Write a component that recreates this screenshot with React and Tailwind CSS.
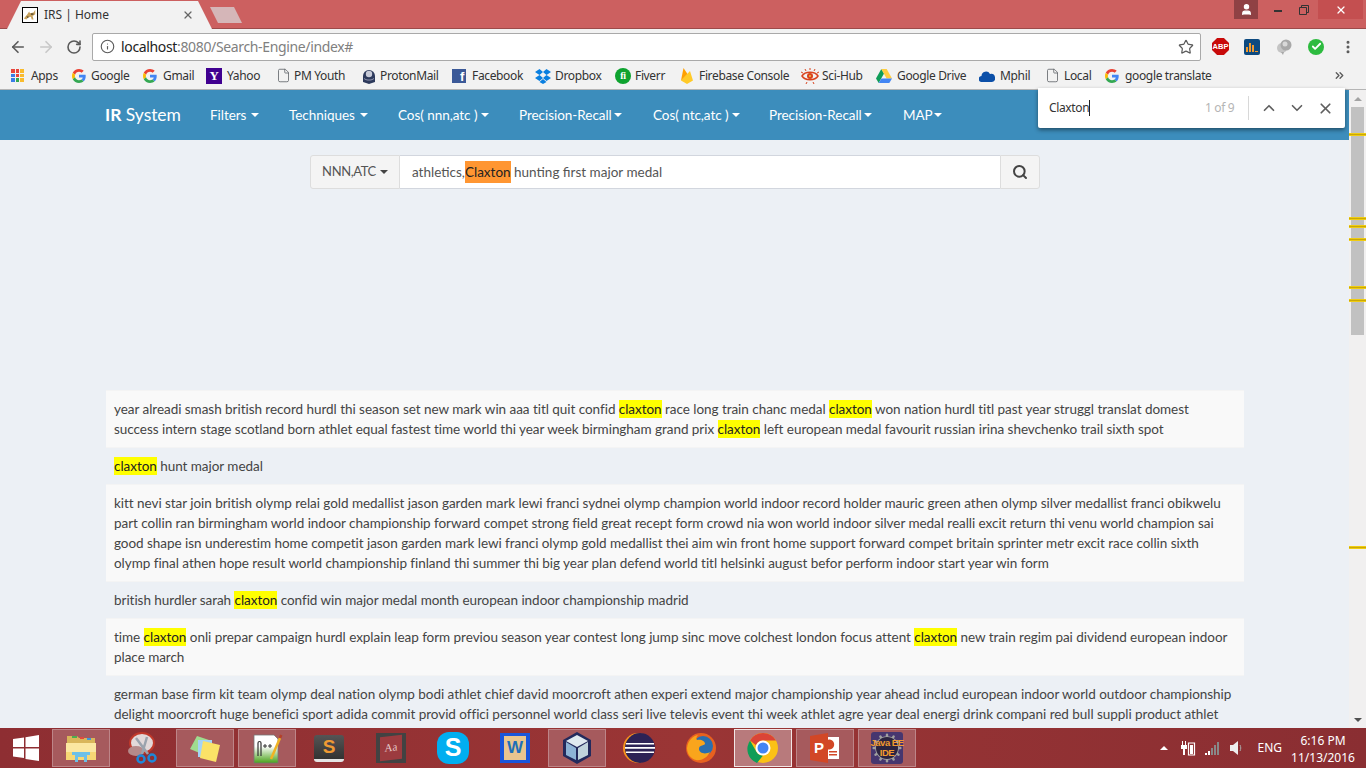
import React from "react";
import { ArrowLeft, ArrowRight, RotateCw, Info, Star, Search, ChevronUp, ChevronDown, X, User, Check, File, MoreVertical, ChevronsRight, Cog } from "lucide-react";

// -----------------------------
// SMALL ICONS
// -----------------------------
const GoogleG = () => (
  <svg viewBox="0 0 48 48" className="w-[14px] h-[14px]">
    <path fill="#EA4335" d="M24 9.5c3.5 0 6.7 1.2 9.2 3.6l6.9-6.9C35.9 2.4 30.5 0 24 0 14.6 0 6.5 5.4 2.6 13.2l8 6.2C12.4 13.7 17.7 9.5 24 9.5z" />
    <path fill="#4285F4" d="M47 24.5c0-1.6-.1-3.100-.4-4.500H24v9h12.900c-.6 3-2.200 5.500-4.800 7.200l7.700 6c4.500-4.200 7.200-10.300 7.200-17.700z" />
    <path fill="#FBBC05" d="M10.600 28.600c-.5-1.400-.8-3-.8-4.600s.3-3.200.8-4.600l-8-6.200C.9 16.500 0 20.100 0 24s.9 7.500 2.600 10.800l8-6.200z" />
    <path fill="#34A853" d="M24 48c6.500 0 11.900-2.100 15.800-5.800l-7.700-6c-2.200 1.500-4.900 2.300-8.100 2.300-6.300 0-11.600-4.200-13.400-9.900l-8 6.200C6.500 42.600 14.600 48 24 48z" />
  </svg>
);

const AppsIcon = () => (
  <div className="grid grid-cols-3 gap-[1px] w-[13px] h-[13px]">
    <span className="bg-[#e8453c]" />
    <span className="bg-[#e8453c]" />
    <span className="bg-[#f9bb2d]" />
    <span className="bg-[#3a7de8]" />
    <span className="bg-[#e8453c]" />
    <span className="bg-[#f9bb2d]" />
    <span className="bg-[#3a7de8]" />
    <span className="bg-[#34a853]" />
    <span className="bg-[#f9bb2d]" />
  </div>
);

const YahooIcon = () => (
  <div className="w-4 h-4 bg-[#400090] text-white text-[13px] font-bold leading-4 text-center font-['Liberation_Serif',serif]">Y</div>
);

const PageIcon = () => <File size={15} strokeWidth={1.3} className="text-[#5f6368]" />;

const ProtonIcon = () => (
  <svg viewBox="0 0 16 16" className="w-4 h-4">
    <path fill="#2d3a5c" d="M2 8a6 6 0 0 1 12 0v6l-6 2-6-2z" />
    <circle cx="8" cy="6" r="3.200" fill="#c8cbd8" />
    <path fill="#8f94ad" d="M3 10c3 2 7 2 10 0v1c-3 2-7 2-10 0z" />
  </svg>
);

const FacebookIcon = () => (
  <div className="w-[14px] h-[14px] bg-[#3b5998] text-white text-[13px] font-bold leading-[15px] text-right pr-[2px] font-['Liberation_Sans',sans-serif]">f</div>
);

const DropboxIcon = () => (
  <svg viewBox="0 0 16 16" className="w-4 h-4">
    <path fill="#0a7fe0" d="M4.500 1 0 4l4.500 3L8 4zM11.500 1 8 4l3.500 3L16 4zM0 10l4.500 3L8 10 4.500 7zM11.500 7 8 10l3.500 3 4.500-3zM4.500 14 8 16l3.500-2L8 11z" />
  </svg>
);

const FiverrIcon = () => (
  <div className="w-4 h-4 rounded-full bg-[#0ea32f] text-white text-[10px] font-bold leading-4 text-center font-['Liberation_Serif',serif]">fi</div>
);

const FirebaseIcon = () => (
  <svg viewBox="0 0 16 16" className="w-4 h-4">
    <path fill="#ffa000" d="M2 12.500 4.500 0l4 6z" />
    <path fill="#f57c00" d="M2 12.500 8.500 6l1.500 2.500z" />
    <path fill="#ffca28" d="M2 12.500 11 3l3 9.500L8 16z" />
  </svg>
);

const SciHubIcon = () => (
  <svg viewBox="0 0 18 16" className="w-[18px] h-4">
    <path fill="none" stroke="#d9431e" strokeWidth="1.500" d="M1 8c3-5 13-5 16 0-3 5-13 5-16 0z" />
    <circle cx="9" cy="8" r="3" fill="#d9431e" />
    <circle cx="9" cy="8" r="1" fill="#f6c33b" />
    <path stroke="#d9431e" strokeWidth="1" d="M5 3 4 1M9 2V0M13 3l1-2M2 5 0 4M16 5l2-1M6 14l-1 2M12 14l1 2" />
  </svg>
);

const DriveIcon = () => (
  <svg viewBox="0 0 16 16" className="w-4 h-4">
    <path fill="#0f9d58" d="M5.300 1 0 10.500l2.700 4.500L8 5.500z" />
    <path fill="#ffcd40" d="M5.300 1h5.400L16 10.500h-5.400z" />
    <path fill="#4285f4" d="M2.700 15h10.600l2.700-4.500H5.400z" />
  </svg>
);

const CloudIcon = () => (
  <svg viewBox="0 0 16 12" className="w-4 h-3">
    <path fill="#0b4fa8" d="M3 12a3 3 0 0 1-.5-6A4.500 4.500 0 0 1 11 4a4 4 0 0 1 2 8z" />
  </svg>
);

const FaviconCat = () => (
  <svg viewBox="0 0 16 16" className="w-4 h-4 border border-black bg-white">
    <path fill="#c9a25d" d="M1 12 5 7l2-3 1 2 4-1 2-3v5l-3 2 1 4h-2l-1-3-4 1-1 2z" />
    <path fill="#6b5a36" d="M9 6h3v2H9zM4 9l3 1-2 2z" />
  </svg>
);

const BalloonIcon = () => (
  <svg viewBox="0 0 16 16" className="w-4 h-4">
    <circle cx="6" cy="9" r="5" fill="#c4c4c4" />
    <circle cx="10" cy="6" r="5.500" fill="#a8a8a8" />
    <circle cx="9" cy="5" r="2.500" fill="#d8d8d8" />
    <path fill="#a8a8a8" d="M5 13h3l-1 3z" />
  </svg>
);

const Caret = ({ className = "" }) => (
  <span className={`inline-block w-0 h-0 border-x-[4px] border-x-transparent border-t-[4px] border-t-current ${className}`} />
);

// -----------------------------
// TASKBAR ICONS
// -----------------------------
const WinLogo = () => (
  <svg viewBox="0 0 26 26" className="w-[26px] h-[26px]">
    <path fill="#fff" d="M0 4l11-1.500V12H0zM12.500 2.300 26 0v12H12.500zM0 13.500h11V23L0 21.500zM12.500 13.500H26V26l-13.500-2z" />
  </svg>
);

const ExplorerIcon = () => (
  <svg viewBox="0 0 32 32" className="w-8 h-8">
    <path fill="#d9b65a" d="M2 4h10l2 2h16v6H2z" />
    <rect x="7" y="4" width="5" height="2" fill="#4caf50" />
    <rect x="15" y="5" width="4" height="2" fill="#e04b3c" />
    <rect x="22" y="6" width="4" height="2" fill="#3a9ad9" />
    <path fill="#fbe7a1" d="M1 11h30v17H1z" />
    <path fill="#f7d774" d="M1 20h30v8H1z" />
    <path fill="#6cc0e8" d="M7 20h18v3h-3v7h-3v-5h-6v5h-3v-7H7z" />
  </svg>
);

const SnipIcon = () => (
  <svg viewBox="0 0 32 32" className="w-8 h-8">
    <ellipse cx="15" cy="11" rx="12" ry="10" fill="#e2d9d9" stroke="#c0392b" strokeWidth="2" />
    <ellipse cx="9" cy="19" rx="8" ry="5" fill="#b58a8a" />
    <path stroke="#9aa3ad" strokeWidth="2.500" d="M9 6l12 16M20 5 15 22" />
    <circle cx="25" cy="26" r="3.500" fill="none" stroke="#1e88d9" strokeWidth="2.500" />
    <circle cx="14" cy="27" r="3.500" fill="none" stroke="#1e88d9" strokeWidth="2.500" />
  </svg>
);

const StickyIcon = () => (
  <svg viewBox="0 0 32 32" className="w-8 h-8">
    <path fill="#9fdc8f" d="M1 17 8 4l12 4-7 14z" />
    <path fill="#a5d3f5" d="M9 8h14v17H9z" />
    <path fill="#fbe267" d="M14 9l17 4-4 17-16-4z" />
  </svg>
);

const NppIcon = () => (
  <svg viewBox="0 0 32 32" className="w-8 h-8">
    <defs>
      <linearGradient id="npp" x1="0" y1="0" x2="0" y2="1">
        <stop offset="0.400" stopColor="#fff" />
        <stop offset="1" stopColor="#4aa31a" />
      </linearGradient>
    </defs>
    <path fill="url(#npp)" stroke="#777" strokeWidth="0.800" d="M3 3h20l4 4v24H3z" />
    <path stroke="#333" strokeWidth="1.200" fill="none" d="M7 24V11a1.500 1.500 0 0 1 3 0v13" />
    <path stroke="#333" strokeWidth="1" d="M12 14h4M14 12v4M17 14h4M19 12v4" />
    <path stroke="#f0b323" strokeWidth="2.500" d="M20 27 29 6" />
    <path stroke="#b3412a" strokeWidth="2.500" d="M29 6l1.300-3" />
  </svg>
);

const SublimeIcon = () => (
  <div className="w-[30px] h-[27px] rounded-[3px] bg-gradient-to-b from-[#555] to-[#333] border-b-[3px] border-[#e5e5e5] text-[#ef9a33] text-[19px] font-bold leading-[24px] text-center font-['Liberation_Sans',sans-serif]">S</div>
);

const DictIcon = () => (
  <div className="w-[30px] h-[30px] bg-[#424242] flex items-center justify-center">
    <div className="w-[22px] h-[24px] bg-[#9c3b3f] text-[#e6c9c9] text-[11px] leading-[22px] text-center -skew-y-6 font-['Liberation_Serif',serif]">Aa</div>
  </div>
);

const SkypeIcon = () => (
  <div className="w-[32px] h-[32px] rounded-[12px] bg-[#01aef0] text-white text-[25px] font-bold leading-[31px] text-center font-['Liberation_Sans',sans-serif]">S</div>
);

const WordIcon = () => (
  <div className="w-[30px] h-[30px] bg-[#1a56db] flex items-center justify-center">
    <div className="w-[22px] h-[24px] bg-[#e9c58f] text-[#1f6fb8] text-[17px] font-bold leading-[24px] text-center font-['Liberation_Sans',sans-serif]">W</div>
  </div>
);

const CubeIcon = () => (
  <svg viewBox="0 0 32 32" className="w-8 h-8">
    <path fill="#232a5c" d="M16 0 30 8v16l-14 8-14-8V8z" />
    <path fill="#dfeaf0" d="M16 3 27 9 16 15 5 9z" />
    <path fill="#8db4d6" d="M5 10l10 6v12L5 23z" />
    <path fill="#c0d4dc" d="M27 10l-10 6v12l10-5z" />
  </svg>
);

const EclipseIcon = () => (
  <svg viewBox="0 0 32 32" className="w-8 h-8">
    <circle cx="15" cy="16" r="15" fill="#f7941e" />
    <circle cx="17" cy="16" r="15" fill="#2c2255" />
    <path fill="#fff" d="M3 11h28v1.500H3zM2 15h30v1.800H2zM3 19.500h28V21H3z" />
  </svg>
);

const FirefoxIcon = () => (
  <svg viewBox="0 0 32 32" className="w-8 h-8">
    <circle cx="16" cy="16" r="15" fill="#e8611f" />
    <circle cx="18" cy="14" r="10" fill="#2a6fb0" />
    <path fill="#f9a51c" d="M2 16C3 8 8 4 13 3c-2 2-2 4-1 5 4-1 8 1 8 4-2 2-6 1-6 5 0 4 6 6 11 3-3 6-9 9-14 8C6 27 2 22 2 16z" />
  </svg>
);

const ChromeIcon = () => (
  <svg viewBox="0 0 32 32" className="w-8 h-8">
    <circle cx="16" cy="16" r="15" fill="#fbc116" />
    <path fill="#db4437" d="M3 8.500A15 15 0 0 1 29 8.500H16a7.500 7.500 0 0 0-7 4.800z" />
    <path fill="#0f9d58" d="M3 8.500 9.500 20a7.500 7.500 0 0 0 6.500 3.500L10 31A15 15 0 0 1 3 8.500z" />
    <circle cx="16" cy="16" r="7.500" fill="#fff" />
    <circle cx="16" cy="16" r="5.500" fill="#4285f4" />
  </svg>
);

const PowerPointIcon = () => (
  <svg viewBox="0 0 32 32" className="w-8 h-8">
    <path fill="#fff" d="M16 5h14v22H16z" />
    <path fill="#d24726" d="M18 8a5 5 0 1 1 0 9zM20 19h8v1.500h-8zM20 22h8v1.500h-8z" />
    <path fill="#d24726" d="M1 4 19 1v30L1 28z" />
    <text x="5" y="21" fill="#fff" fontSize="15" fontWeight="bold" fontFamily="Liberation Sans">P</text>
  </svg>
);

const JavaEEIcon = () => (
  <div className="w-8 h-8 bg-[#46366f] rounded-[3px] relative flex items-center justify-center">
    <Cog size={32} strokeWidth={1.8} className="absolute inset-0 text-[#a0a0a0]" />
    <div className="absolute inset-[5px] rounded-full bg-[#2c2440]" />
    <div className="relative text-[#f29a2e] text-[9.5px] font-bold leading-[10px] text-center whitespace-nowrap tracking-[-0.5px] font-['Liberation_Sans',sans-serif]">
      Java EE
      <br />
      IDE
    </div>
  </div>
);

// -----------------------------
// DATA
// -----------------------------
const bookmarks = [
  { icon: <AppsIcon />, label: "Apps", w: "w-[61px]", gap: "gap-[7px]" },
  { icon: <GoogleG />, label: "Google", w: "w-[71px]", gap: "gap-[5px]" },
  { icon: <GoogleG />, label: "Gmail", w: "w-[63px]", gap: "gap-[6px]" },
  { icon: <YahooIcon />, label: "Yahoo", w: "w-[70px]", gap: "gap-[5px]" },
  { icon: <PageIcon />, label: "PM Youth", w: "w-[85px]", gap: "gap-[3px]" },
  { icon: <ProtonIcon />, label: "ProtonMail", w: "w-[91px]", gap: "gap-[3px]" },
  { icon: <FacebookIcon />, label: "Facebook", w: "w-[83px]", gap: "gap-[6px]" },
  { icon: <DropboxIcon />, label: "Dropbox", w: "w-[80px]", gap: "gap-[4px]" },
  { icon: <FiverrIcon />, label: "Fiverr", w: "w-[64px]", gap: "gap-[4px]" },
  { icon: <FirebaseIcon />, label: "Firebase Console", w: "w-[122px]", gap: "gap-[4px]" },
  { icon: <SciHubIcon />, label: "Sci-Hub", w: "w-[75px]", gap: "gap-[3px]" },
  { icon: <DriveIcon />, label: "Google Drive", w: "w-[103px]", gap: "gap-[5px]" },
  { icon: <CloudIcon />, label: "Mphil", w: "w-[66px]", gap: "gap-[5px]" },
  { icon: <PageIcon />, label: "Local", w: "w-[60px]", gap: "gap-[4px]" },
  { icon: <GoogleG />, label: "google translate", w: "w-[125px]", gap: "gap-[6px]" },
];

const navItems = [
  { label: "Filters", w: "w-[79px]", caret: "ml-[5px]" },
  { label: "Techniques", w: "w-[109px]", caret: "ml-[5px]" },
  { label: "Cos( nnn,atc )", w: "w-[121px]", caret: "ml-[4px]" },
  { label: "Precision-Recall", w: "w-[134px]", caret: "ml-[2px]" },
  { label: "Cos( ntc,atc )", w: "w-[116px]", caret: "ml-[3px]" },
  { label: "Precision-Recall", w: "w-[134px]", caret: "ml-[2px]" },
  { label: "MAP", w: "w-[70px]", caret: "ml-[1px]" },
];

// ** marks a highlighted term
const results = [
  [
    "year alreadi smash british record hurdl thi season set new mark win aaa titl quit confid **claxton** race long train chanc medal **claxton** won nation hurdl titl past year struggl translat domest",
    "success intern stage scotland born athlet equal fastest time world thi year week birmingham grand prix **claxton** left european medal favourit russian irina shevchenko trail sixth spot",
  ],
  ["**claxton** hunt major medal"],
  [
    "kitt nevi star join british olymp relai gold medallist jason garden mark lewi franci sydnei olymp champion world indoor record holder mauric green athen olymp silver medallist franci obikwelu",
    "part collin ran birmingham world indoor championship forward compet strong field great recept form crowd nia won world indoor silver medal realli excit return thi venu world champion sai",
    "good shape isn underestim home competit jason garden mark lewi franci olymp gold medallist thei aim win front home support forward compet britain sprinter metr excit race collin sixth",
    "olymp final athen hope result world championship finland thi summer thi big year plan defend world titl helsinki august befor perform indoor start year win form",
  ],
  ["british hurdler sarah **claxton** confid win major medal month european indoor championship madrid"],
  [
    "time **claxton** onli prepar campaign hurdl explain leap form previou season year contest long jump sinc move colchest london focus attent **claxton** new train regim pai dividend european indoor",
    "place march",
  ],
  [
    "german base firm kit team olymp deal nation olymp bodi athlet chief david moorcroft athen experi extend major championship year ahead includ european indoor world outdoor championship",
    "delight moorcroft huge benefici sport adida commit provid offici personnel world class seri live televis event thi week athlet agre year deal energi drink compani red bull suppli product athlet",
  ],
];

const Line = ({ text }) => (
  <div className="whitespace-nowrap">
    {text.split("**").map((part, i) =>
      i % 2 === 1 ? (
        <span key={i} className="bg-[#ffff00] text-[#222] py-[1px]">{part}</span>
      ) : (
        <span key={i}>{part}</span>
      )
    )}
  </div>
);

const marks = ["top-[43px]", "top-[127px]", "top-[135px]", "top-[148px]", "top-[196px]", "top-[209px]", "top-[456px]"];

const taskIcons = [
  { icon: <ExplorerIcon />, open: true },
  { icon: <SnipIcon /> },
  { icon: <StickyIcon />, open: true },
  { icon: <NppIcon />, open: true },
  { icon: <SublimeIcon /> },
  { icon: <DictIcon /> },
  { icon: <SkypeIcon /> },
  { icon: <WordIcon /> },
  { icon: <CubeIcon />, open: true },
  { icon: <EclipseIcon /> },
  { icon: <FirefoxIcon /> },
  { icon: <ChromeIcon />, active: true },
  { icon: <PowerPointIcon />, open: true },
  { icon: <JavaEEIcon />, open: true },
];

export default function App() {
  return (
    <div className="h-screen w-full overflow-hidden flex flex-col relative bg-[#f2f2f2] font-['Noto_Sans',sans-serif]">
      {/* tab strip */}
      <div className="h-[29px] shrink-0 bg-[#cc6060] border-b border-[#9c4a4a] flex pl-[7px] relative">
        <div className="w-[205px] h-[28px] mt-[1px] bg-[#f2f2f2] [clip-path:polygon(0_100%,14px_0,191px_0,100%_100%)] flex items-center pl-[15px] pr-[18px]">
          <FaviconCat />
          <span className="ml-[6px] text-[12px] text-[#333] flex-1">IRS | Home</span>
          <X size={12} strokeWidth={2.5} className="text-[#666]" />
        </div>
        <div className="w-[32px] h-[16px] mt-[7px] ml-[-2px] bg-[#d5b6b8] [clip-path:polygon(0_0,24px_0,100%_100%,8px_100%)]" />
        <div className="ml-auto flex items-start pr-[3px]">
          <div className="w-[24px] h-[19px] bg-[#8f4144] flex items-center justify-center text-white">
            <User size={13} fill="white" />
          </div>
          <div className="w-[16px] h-[19px] ml-[12px] flex items-center justify-center">
            <div className="w-[8px] h-[2px] bg-[#333] mt-[3px]" />
          </div>
          <div className="w-[28px] h-[19px] ml-[4px] flex items-center justify-center">
            <svg viewBox="0 0 10 10" className="w-[10px] h-[10px]">
              <path fill="none" stroke="#333" d="M.5 2.500h7v7h-7zM2.500 2.500v-2h7v7h-2" />
            </svg>
          </div>
          <div className="w-[45px] h-[19px] bg-[#c44f50] flex items-center justify-center text-white">
            <X size={12} strokeWidth={2.5} />
          </div>
        </div>
      </div>

      {/* address bar */}
      <div className="h-[33px] shrink-0 flex items-center bg-[#f2f2f2] pl-[9px] pt-[2px]">
        <ArrowLeft size={18} strokeWidth={2.2} className="text-[#5a5a5a]" />
        <ArrowRight size={18} strokeWidth={2.2} className="text-[#c8c8c8] ml-[10px]" />
        <RotateCw size={16} strokeWidth={2.4} className="text-[#5a5a5a] ml-[11px]" />
        <div className="ml-[10px] w-[1109px] h-[28px] bg-white border border-[#a9a9a9] rounded-[2px] flex items-center pl-[7px] pr-[6px]">
          <Info size={15} strokeWidth={1.8} className="text-[#5a5a5a]" />
          <span className="ml-[6px] text-[14px] text-[#222] flex-1 tracking-[-0.35px]">
            localhost<span className="text-[#808080]">:8080/Search-Engine/index#</span>
          </span>
          <Star size={16} strokeWidth={1.8} className="text-[#5a5a5a]" />
        </div>
        <div className="ml-[11px] w-[17px] h-[17px] bg-[#c80a0a] [clip-path:polygon(30%_0,70%_0,100%_30%,100%_70%,70%_100%,30%_100%,0_70%,0_30%)] text-white text-[7.5px] font-bold leading-[17px] text-center font-['Liberation_Sans',sans-serif]">ABP</div>
        <div className="ml-[15px] w-[16px] h-[16px] bg-[#0d4a80] rounded-[2px] flex items-end justify-center gap-[1px] pb-[3px]">
          <span className="w-[2px] h-[5px] bg-[#f29a2e]" />
          <span className="w-[2px] h-[9px] bg-[#f29a2e]" />
          <span className="w-[2px] h-[7px] bg-[#f29a2e]" />
          <span className="w-[3px] h-[1px] bg-[#f29a2e]" />
        </div>
        <div className="ml-[16px]">
          <BalloonIcon />
        </div>
        <div className="ml-[16px] w-[16px] h-[16px] rounded-full bg-[#2dbb3f] flex items-center justify-center text-white">
          <Check size={11} strokeWidth={4} />
        </div>
        <MoreVertical size={16} strokeWidth={2.5} className="text-[#5a5a5a] ml-[16px]" />
      </div>

      {/* bookmarks bar */}
      <div className="h-[28px] shrink-0 flex items-center pl-[11px] border-b border-[#b5b5b5] bg-[#f2f2f2]">
        {bookmarks.map((b) => (
          <div key={b.label + b.w} className={`${b.w} ${b.gap} shrink-0 flex items-center text-[12px] text-[#333] whitespace-nowrap tracking-[-0.35px]`}>
            {b.icon}
            <span>{b.label}</span>
          </div>
        ))}
        <ChevronsRight size={13} strokeWidth={2.5} className="text-[#5a5a5a] ml-[103px]" />
      </div>

      {/* page + scrollbar */}
      <div className="flex-1 min-h-0 flex font-['Lato',sans-serif]">
        <div className="flex-1 min-w-0 bg-[#ecf0f5] overflow-hidden">
          <nav className="h-[50px] bg-[#3c8dbc] flex items-center pl-[105px] text-white text-[13.5px] tracking-[-0.04px]">
            <div className="w-[90px] text-[17.5px] whitespace-nowrap"><b>IR</b> System</div>
            {navItems.map((n, i) => (
              <div key={i} className={`${n.w} shrink-0 pl-[15px] whitespace-nowrap flex items-center`}>
                {n.label}
                <Caret className={n.caret} />
              </div>
            ))}
          </nav>

          <div className="pt-[15px] pl-[310px]">
            <div className="w-[730px] h-[34px] flex text-[13.5px] text-[#555]">
              <div className="w-[90px] bg-[#f4f4f4] border border-[#ddd] rounded-l-[3px] flex items-center justify-center gap-[4px] text-[13px] tracking-[-0.4px]">
                NNN,ATC <Caret className="text-[#444]" />
              </div>
              <div className="flex-1 bg-white border-y border-[#d2d6de] flex items-center pl-[12px] whitespace-pre">
                athletics,<span className="bg-[#ff9632] text-[#222] py-[1px]">Claxton</span> hunting first major medal
              </div>
              <div className="w-[40px] bg-[#f4f4f4] border border-[#ddd] rounded-r-[3px] flex items-center justify-center text-[#444]">
                <Search size={16} strokeWidth={3} />
              </div>
            </div>
          </div>

          <div className="mt-[201px] ml-[106px] w-[1138px] text-[13.5px] tracking-[-0.04px] leading-[20px] text-[#444]">
            {results.map((lines, i) => (
              <div key={i} className={`p-[8px] border-t border-[#f4f4f4] ${i % 2 === 0 ? "bg-[#f9f9f9]" : "bg-[#ecf0f5]"}`}>
                {lines.map((l, j) => (
                  <Line key={j} text={l} />
                ))}
              </div>
            ))}
          </div>
        </div>

        {/* scrollbar with find markers */}
        <div className="w-[17px] shrink-0 bg-[#f1f0f0] flex flex-col items-center relative">
          <div className="h-[17px] flex items-center justify-center text-[#a3a3a3]">
            <span className="w-0 h-0 border-x-[4px] border-x-transparent border-b-[4px] border-b-current" />
          </div>
          <div className="w-[13px] h-[228px] bg-[#c1c1c1]" />
          {marks.map((m) => (
            <div key={m} className={`absolute left-0 right-0 h-[3px] border-y border-[#f0cc10] bg-[#c9a808] ${m}`} />
          ))}
          <div className="mt-auto h-[17px] flex items-center justify-center text-[#505050]">
            <Caret />
          </div>
        </div>
      </div>

      {/* find in page overlay */}
      <div className="absolute left-[1038px] top-[88px] w-[307px] h-[40px] bg-white rounded-b-[2px] shadow-[0_2px_4px_rgba(0,0,0,0.45)] flex items-center pl-[11px] text-[12px] tracking-[-0.35px]">
        <span className="text-[#333]">Claxton</span>
        <span className="w-[1px] h-[16px] bg-[#222]" />
        <span className="absolute left-[167px] text-[#b4b4b4]">1 of 9</span>
        <span className="absolute left-[210px] w-[1px] h-[24px] bg-[#d8d8d8]" />
        <ChevronUp size={18} strokeWidth={2.2} className="absolute left-[222px] text-[#5f5f5f]" />
        <ChevronDown size={18} strokeWidth={2.2} className="absolute left-[250px] text-[#5f5f5f]" />
        <X size={17} strokeWidth={2.4} className="absolute left-[279px] text-[#5f5f5f]" />
      </div>

      {/* taskbar */}
      <div className="h-[40px] shrink-0 bg-gradient-to-r from-[#8e2e32] via-[#9a3535] to-[#8a2e32] flex items-center">
        <div className="w-[52px] flex justify-center pr-[1px]">
          <WinLogo />
        </div>
        <div className="flex gap-[4px]">
          {taskIcons.map((t, i) => (
            <div
              key={i}
              className={`w-[58px] h-[38px] flex items-center justify-center border ${
                t.active ? "bg-[#b87a7c] border-[#f2e6e6]" : t.open ? "bg-[#a65a5d] border-[#bd8588]" : "border-transparent"
              }`}
            >
              {t.icon}
            </div>
          ))}
        </div>
        <div className="ml-auto flex items-center text-white text-[12px] font-['Noto_Sans',sans-serif]">
          <span className="w-0 h-0 border-x-[4px] border-x-transparent border-b-[4px] border-b-white" />
          <svg viewBox="0 0 16 16" className="w-4 h-4 ml-[12px]">
            <path fill="none" stroke="#fff" strokeWidth="1.200" d="M8.500 3h6v12h-6z" />
            <path fill="#fff" d="M10 5h3v9h-3zM1 5h6v4H5v6H3V9H1zM2 1h1v4H2zM5 1h1v4H5z" />
          </svg>
          <svg viewBox="0 0 16 16" className="w-4 h-4 ml-[8px]">
            <path fill="#fff" d="M1 13h2v2H1zM4 11h2v4H4z" />
            <path fill="#888" d="M7 8h2v7H7zM10 5h2v10h-2zM13 2h2v13h-2z" />
          </svg>
          <svg viewBox="0 0 16 16" className="w-4 h-4 ml-[8px]">
            <path fill="#eee" d="M2 5h3l5-4v14l-5-4H2z" />
            <path fill="none" stroke="#aaa" d="M12 5c1 2 1 4 0 6" />
          </svg>
          <span className="ml-[13px]">ENG</span>
          <div className="ml-[6px] w-[70px] text-center leading-[17px] mr-[8px] pt-[1px]">
            <div>6:16 PM</div>
            <div>11/13/2016</div>
          </div>
        </div>
      </div>
    </div>
  );
}
